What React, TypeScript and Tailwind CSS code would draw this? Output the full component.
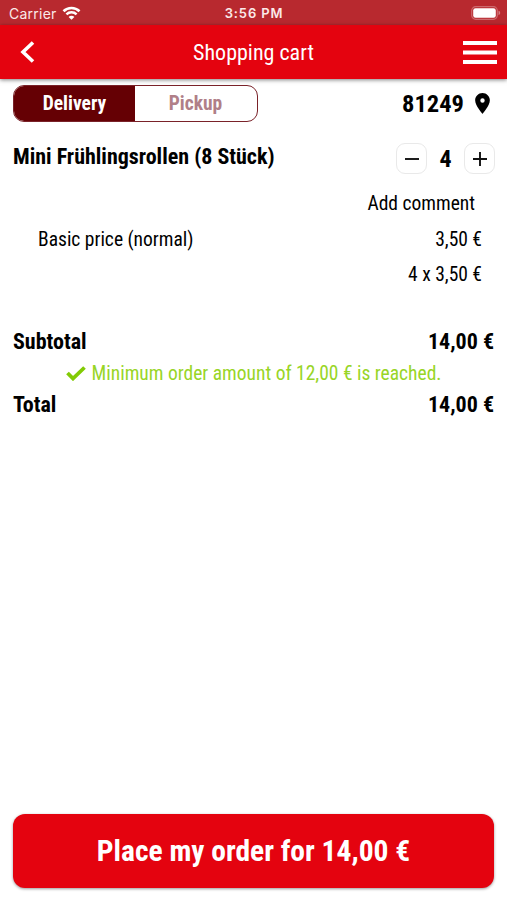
import React from "react";

const WifiIcon = () => (
  <svg width="19" height="14" viewBox="0 0 18 14" fill="none" stroke="#fff" className="mb-px">
    <path d="M1 5.2C5.4.9 12.600.9 17 5.200" strokeWidth="2.600" />
    <path d="M3.900 8.300c2.900-2.700 7.300-2.700 10.200 0" strokeWidth="2.500" />
    <path d="M9 13.800 6.100 10.900c1.600-1.400 4.200-1.400 5.800 0z" fill="#fff" stroke="none" />
  </svg>
);

const BatteryIcon = () => (
  <svg width="31" height="14" viewBox="0 0 31 14" className="mb-px">
    <rect x="0.700" y="0.700" width="25.600" height="12.600" rx="4" fill="none" stroke="#fff" strokeOpacity="0.300" strokeWidth="1.200" />
    <rect x="2.200" y="2.200" width="22.600" height="9.600" rx="2.300" fill="#fff" />
    <path d="M27.500 4.800v4.400c2.300-.6 2.300-3.800 0-4.400z" fill="#fff" fillOpacity="0.400" />
  </svg>
);

const QuantityButton = ({ label, path }: { label: string; path: string }) => (
  <button
    aria-label={label}
    className="flex size-[31px] items-center justify-center rounded-[9px] border border-[#e9e9e9]"
  >
    <svg width="14" height="14" viewBox="0 0 14 14" stroke="#111" strokeWidth="1.900">
      <path d={path} />
    </svg>
  </button>
);

const SumRow = ({ label, amount }: { label: string; amount: string }) => (
  <div className="flex h-[31px] items-center justify-between text-[22px] font-bold">
    <span>{label}</span>
    <span>{amount}</span>
  </div>
);

const App = () => {
  return (
    <div className="flex h-[900px] w-[507px] flex-col overflow-hidden bg-white font-['Roboto_Condensed','Roboto',sans-serif] text-black font-stretch-condensed">
      <div className="grid h-[25px] grid-cols-3 items-center bg-[#b8292f] pt-[2px] font-['Inter',sans-serif] text-[13px] text-[#fbe9e9] font-stretch-normal">
        <div className="flex items-center gap-[5px] pl-[9px]">
          <span className="text-[14px] tracking-[0.25px]">Carrier</span>
          <WifiIcon />
        </div>
        <span className="pl-px text-center font-semibold tracking-[0.85px]">3:56 PM</span>
        <div className="flex justify-end pr-[5px]">
          <BatteryIcon />
        </div>
      </div>

      <header className="flex h-[54px] shrink-0 items-center justify-between bg-[#e4030f] pr-[10px] pl-[20px] text-white shadow-[0_1px_4px_rgba(0,0,0,0.5)]">
        <svg width="24" height="22" viewBox="0 0 24 22" fill="none" stroke="#fff" strokeWidth="3.600">
          <path d="M13 1.500 3 11l10 9.500" />
        </svg>
        <h1 className="text-[22px]">Shopping cart</h1>
        <svg width="34" height="23" viewBox="0 0 34 23" stroke="#fff" strokeWidth="4">
          <path d="M0 2h34M0 11.500h34M0 21h34" />
        </svg>
      </header>

      <main className="flex grow flex-col px-[13px] pt-[6px]">
        <div className="flex h-[37px] items-center justify-between">
          <div className="flex h-[37px] w-[245px] overflow-hidden rounded-[11px] border border-[#7a2229] text-[19.5px] font-bold">
            <button className="w-[121px] bg-[#650004] pt-px text-white">Delivery</button>
            <button className="grow pt-px pr-px text-[#b07f88]">Pickup</button>
          </div>
          <div className="flex items-center gap-[11px] pr-[4px]">
            <span className="pt-[2px] text-[24.5px] font-bold">81249</span>
            <svg width="15" height="21" viewBox="0 0 14 20" className="mb-px">
              <path
                fillRule="evenodd"
                d="M7 0C3.100 0 0 3.100 0 7c0 5.200 7 13 7 13s7-7.800 7-13c0-3.900-3.100-7-7-7zm0 9.200a2.100 2.100 0 1 1 0-4.200 2.100 2.100 0 0 1 0 4.200z"
              />
            </svg>
          </div>
        </div>

        <div className="mt-[20px] flex h-[33px] items-center justify-between font-bold">
          <h2 className="pb-[4px] text-[22px]">Mini Frühlingsrollen (8 Stück)</h2>
          <div className="-mr-px flex items-center">
            <QuantityButton label="Less" path="M0 7h14" />
            <span className="w-[37px] text-center text-[24px]">4</span>
            <QuantityButton label="More" path="M0 7h14M7 0v14" />
          </div>
        </div>

        <div className="mt-[11px] text-[19.5px]">
          <div className="flex h-[36px] items-center justify-end pr-[19px]">Add comment</div>
          <div className="flex h-[35px] items-center justify-between pr-[12px] pl-[25px]">
            <span>Basic price (normal)</span>
            <span>3,50 €</span>
          </div>
          <div className="flex h-[36px] items-center justify-end pr-[12px]">4 x 3,50 €</div>
        </div>

        <div className="mt-[33px]">
          <SumRow label="Subtotal" amount="14,00 €" />
          <div className="flex h-[32px] items-center justify-center gap-[6px] text-[19.5px] text-[#98d526]">
            <svg width="20" height="15" viewBox="0 0 20 15" fill="none" stroke="#82cb05" strokeWidth="3.800">
              <path d="m1.500 7 5.500 5.500L18.500 1.500" />
            </svg>
            <span className="pt-[2px]">Minimum order amount of 12,00 € is reached.</span>
          </div>
          <SumRow label="Total" amount="14,00 €" />
        </div>

        <button className="mt-auto mb-[12px] h-[74px] rounded-xl bg-[#e4030f] pt-px text-[29.5px] font-bold text-white shadow-[0_1px_3px_rgba(0,0,0,0.4)]">
          Place my order for 14,00 €
        </button>
      </main>
    </div>
  );
};

export default App;
